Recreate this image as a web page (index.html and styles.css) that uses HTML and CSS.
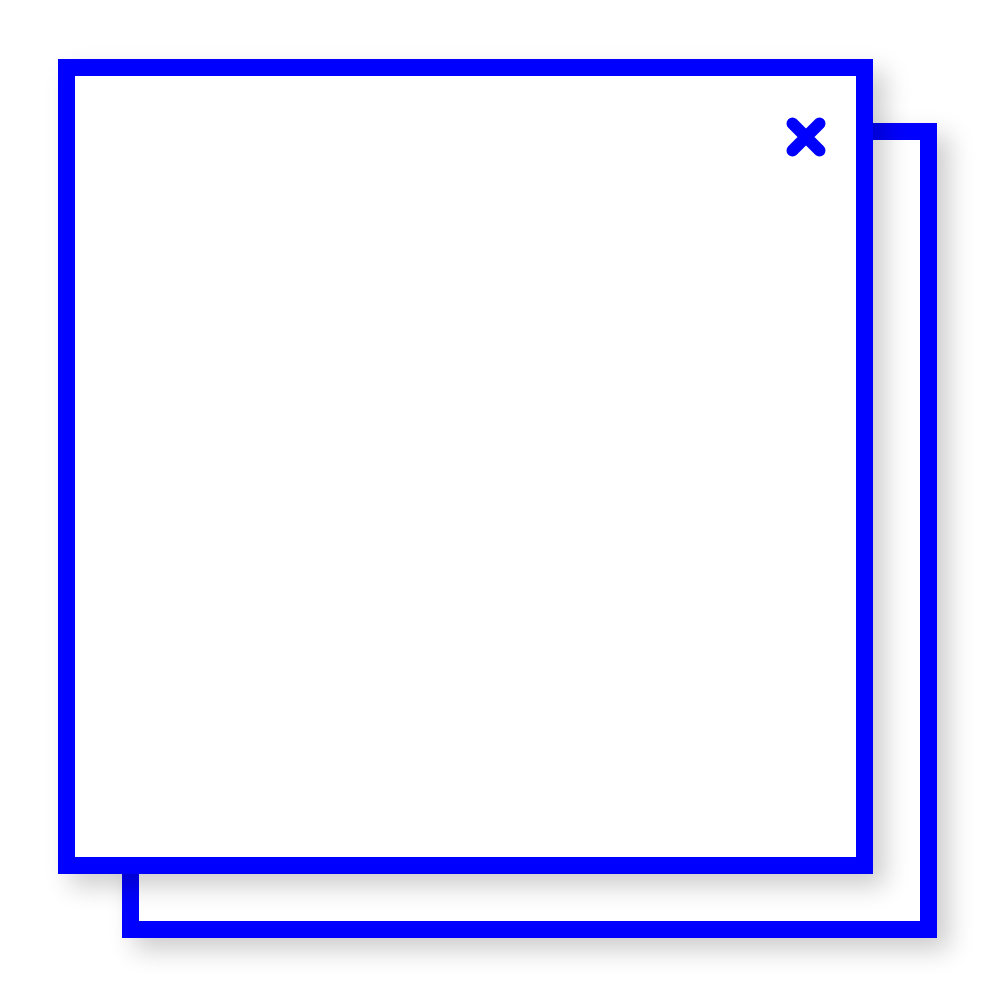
FILE: index.html
```html
<!DOCTYPE html>
<html>
<head>
<meta charset="utf-8">
<link rel="stylesheet" href="styles.css">
</head>
<body>
<div class="stack">
  <div class="window back"></div>
  <div class="window front">
    <button class="close" aria-label="Close">
      <svg width="40" height="40" viewBox="0 0 40 40">
        <path d="M6.5 6.5 L33.5 33.5 M33.5 6.5 L6.5 33.5" stroke="#0000ff" stroke-width="12" stroke-linecap="round" fill="none"/>
      </svg>
    </button>
  </div>
</div>
</body>
</html>
```
FILE: styles.css
```css
html, body {
  margin: 0;
  padding: 0;
  background: #ffffff;
}
body {
  min-height: 1000px;
}
.stack {
  display: grid;
  padding: 59px 0 0 58px;
}
.window {
  grid-area: 1 / 1;
  width: 815px;
  height: 815px;
  box-sizing: border-box;
  border: 17px solid #0000ff;
  background: #ffffff;
  box-shadow: 12px 12px 24px rgba(0, 0, 0, 0.2);
}
.back {
  margin: 64px 0 0 64px;
}
.front {
  position: relative;
  z-index: 1;
  display: flex;
  justify-content: flex-end;
  align-items: flex-start;
  padding: 41px 30px 0 0;
}
.close {
  border: 0;
  padding: 0;
  margin: 0;
  background: none;
  width: 40px;
  height: 40px;
  display: block;
}
.close svg {
  display: block;
}
```
